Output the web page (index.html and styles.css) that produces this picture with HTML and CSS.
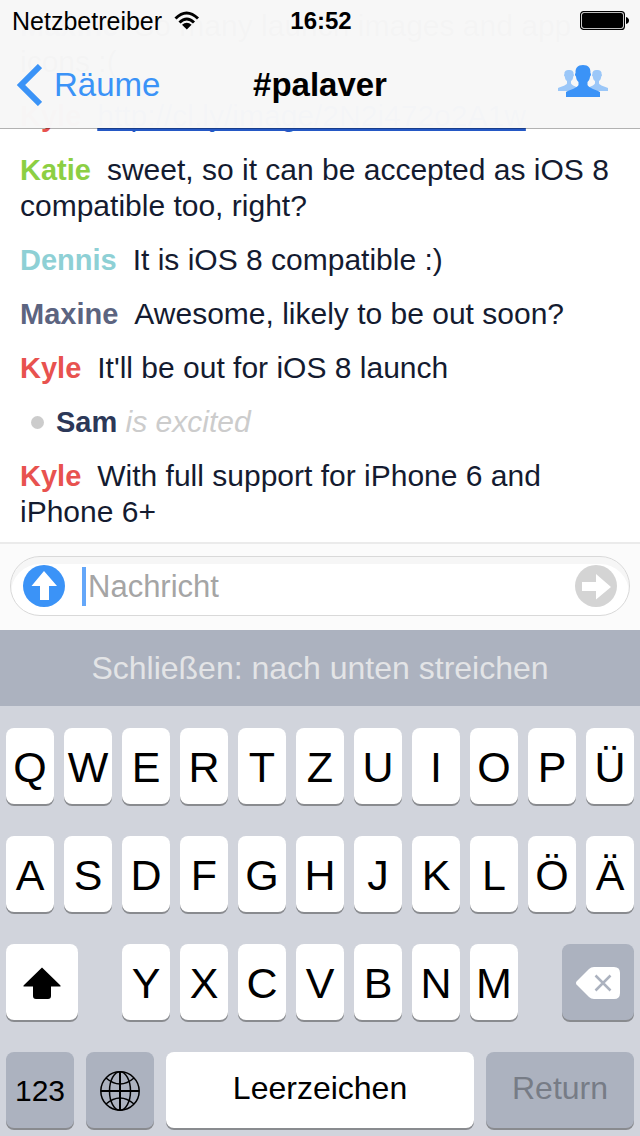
FILE: index.html
```html
<!DOCTYPE html>
<html lang="de">
<head>
<meta charset="utf-8">
<meta name="viewport" content="width=device-width, initial-scale=1">
<title>#palaver</title>
<link rel="stylesheet" href="styles.css">
</head>
<body class="app">
<header class="header">
  <div class="status">
    <div class="carrier">
      <span>Netzbetreiber</span>
      <svg width="26" height="20" viewBox="0 0 26 20" fill="none" stroke="#000" stroke-width="3" aria-hidden="true">
        <path d="M1.5 7.5Q12.500-3.500 24 7.500M5.500 11.500Q12.800 4.500 20 11.500"/>
        <path d="M8 13.800Q12.800 9.800 17.600 13.800L12.800 18.500Z" fill="#000" stroke="none"/>
      </svg>
    </div>
    <time class="time">16:52</time>
    <svg class="battery" width="50" height="20" viewBox="0 0 50 20" aria-hidden="true">
      <rect x=".6" y=".6" width="43.800" height="17.800" rx="3" fill="#fff" stroke="#000" stroke-width="1.200"/>
      <rect x="2" y="2" width="41" height="15" rx="2"/>
      <path d="M46 6q3 1 3 3.500t-3 3.500z"/>
    </svg>
  </div>
  <nav class="nav">
    <button class="back" type="button">
      <svg width="26" height="42" viewBox="0 0 26 42" fill="none" stroke="#3b93f7" stroke-width="6" aria-hidden="true"><path d="M24 2L5 21l19 19"/></svg>
      <span>Räume</span>
    </button>
    <h1 class="title">#palaver</h1>
    <button class="people" type="button" aria-label="Mitglieder">
      <svg width="50" height="32" viewBox="0 0 50 32" aria-hidden="true">
        <g fill="#9bc7f8">
          <path d="M0 26v-3c3-1.500 8-2.500 9-4.500v-2.500c-1.500-1-2-2.500-2.200-4.500-1-.5-1-2-.3-2.500C6 6.500 8 5 11 5s5 1.500 4.500 4c.7.500.7 2-.3 2.500-.2 2-.7 3.500-2.200 4.500v2.500c1 2 4 2.500 6 4v3.500z"/>
          <path d="M50 26v-3c-3-1.500-8-2.500-9-4.500v-2.500c1.500-1 2-2.500 2.200-4.500 1-.5 1-2 .3-2.500C44 6.500 42 5 39 5s-5 1.500-4.500 4c-.7.500-.7 2 .3 2.500.2 2 .7 3.500 2.200 4.500v2.500c-1 2-4 2.500-6 4v3.500z"/>
        </g>
        <path fill="#3b93f7" d="M8 32v-5c3-2 11.500-4 12.500-7v-3c-1.800-1.500-2.300-3.200-2.500-5.500-1.200-.5-1.300-3-.4-3.500C17.200 3 19.500 0 25 0s7.800 3 7.400 8c.9.500.8 3-.4 3.500-.2 2.300-.7 4-2.500 5.500v3c1 3 9.500 5 12.500 7v5z"/>
      </svg>
    </button>
  </nav>
</header>

<main class="chat">
  <p class="message"><b class="maxine">Maxine</b>So many launch images and app icons :(</p>
  <p class="message"><b class="kyle">Kyle</b><a class="link" href="http://cl.ly/image/2N2i472o2A1w">http://cl.ly/image/2N2i472o2A1w</a></p>
  <p class="message"><b class="katie">Katie</b>sweet, so it can be accepted as iOS 8 compatible too, right?</p>
  <p class="message"><b class="dennis">Dennis</b>It is iOS 8 compatible :)</p>
  <p class="message"><b class="maxine">Maxine</b>Awesome, likely to be out soon?</p>
  <p class="message"><b class="kyle">Kyle</b>It'll be out for iOS 8 launch</p>
  <p class="message action"><span class="dot"></span><span><strong class="sam">Sam</strong> <em>is excited</em></span></p>
  <p class="message"><b class="kyle">Kyle</b>With full support for iPhone 6 and iPhone 6+</p>
</main>

<form class="composer">
  <div class="field">
    <button class="round" type="button" aria-label="Hochladen">
      <svg width="42" height="42" viewBox="0 0 42 42" aria-hidden="true"><circle cx="21" cy="21" r="21" fill="#3b93f7"/><path fill="#fff" d="M21 6L34 21H26V35H17V21H8.500Z"/></svg>
    </button>
    <span class="caret"></span>
    <input class="input" type="text" placeholder="Nachricht" aria-label="Nachricht">
    <button class="round" type="button" aria-label="Senden">
      <svg width="42" height="42" viewBox="0 0 42 42" aria-hidden="true"><circle cx="21" cy="21" r="21" fill="#d4d4d4"/><path fill="#fff" d="M36 22L21 34.500V26H7V17H21V9Z"/></svg>
    </button>
  </div>
</form>

<div class="hint">Schließen: nach unten streichen</div>

<section class="keyboard" aria-label="Tastatur">
  <div class="row">
    <button class="key">Q</button><button class="key">W</button><button class="key">E</button><button class="key">R</button><button class="key">T</button><button class="key">Z</button><button class="key">U</button><button class="key">I</button><button class="key">O</button><button class="key">P</button><button class="key">Ü</button>
  </div>
  <div class="row">
    <button class="key">A</button><button class="key">S</button><button class="key">D</button><button class="key">F</button><button class="key">G</button><button class="key">H</button><button class="key">J</button><button class="key">K</button><button class="key">L</button><button class="key">Ö</button><button class="key">Ä</button>
  </div>
  <div class="row shift-row">
    <button class="key" aria-label="Umschalttaste">
      <svg width="38" height="32" viewBox="0 0 38 32" aria-hidden="true"><path d="M19 .5L37.500 18.500v1H28V29q0 3-3 3H13q-3 0-3-3V19.500H.5v-1Z"/></svg>
    </button>
    <div class="row">
      <button class="key">Y</button><button class="key">X</button><button class="key">C</button><button class="key">V</button><button class="key">B</button><button class="key">N</button><button class="key">M</button>
    </div>
    <button class="key dark" aria-label="Löschen">
      <svg width="44" height="32" viewBox="0 0 44 32" aria-hidden="true"><path fill="#fff" d="M.5 14.500L13 2q2-2 5-2H38q6 0 6 6V26q0 6-6 6H18q-3 0-5-2L.5 17.500q-1-1.500 0-3Z"/><path d="M19.500 8.500l15 15m0-15l-15 15" stroke="#acb2bf" stroke-width="2.500"/></svg>
    </button>
  </div>
  <div class="row bottom-row">
    <button class="key dark small">123</button>
    <button class="key dark" aria-label="Tastatur wechseln">
      <svg width="40" height="40" viewBox="0 0 40 40" fill="none" stroke="#000" stroke-width="1.500" aria-hidden="true"><circle cx="20" cy="20" r="19.200"/><ellipse cx="20" cy="20" rx="10.500" ry="19.200"/><path d="M6 7q14 12 28 0M6 33q14-12 28 0"/><path d="M20 1v38M1 20h38" stroke-width="2"/></svg>
    </button>
    <button class="key word">Leerzeichen</button>
    <button class="key dark word" disabled>Return</button>
  </div>
</section>
</body>
</html>
```
FILE: styles.css
```css
* { box-sizing: border-box; }

.app {
  margin: 0;
  min-height: 100vh;
  display: flex;
  flex-direction: column;
  background: #fff;
  font-family: "Liberation Sans", Arial, sans-serif;
  color: #141b30;
}

button, input { font: inherit; border: 0; padding: 0; background: none; }
svg { display: block; flex: none; }

.header {
  position: absolute;
  top: 0;
  left: 0;
  right: 0;
  color: #000;
  background: rgba(247, 247, 247, .99);
  background-clip: padding-box;
  border-bottom: 1px solid rgba(0, 0, 0, .3);
}
.status {
  height: 40px;
  display: grid;
  grid-template-columns: 1fr auto 1fr;
  align-items: center;
  padding: 2px 10px 0 12px;
  font-size: 24px;
}
.carrier { display: flex; align-items: center; gap: 12px; font-size: 25px; }
.time { font-weight: bold; }
.battery { justify-self: end; }
.nav {
  height: 88px;
  display: grid;
  grid-template-columns: 1fr auto 1fr;
  align-items: center;
  padding: 2px 16px 0;
  font-size: 33px;
}
.back { display: flex; align-items: center; gap: 12px; color: #3b93f7; }
.title { margin: 0; font-size: inherit; font-weight: bold; }
.people { justify-self: end; padding: 0 16px 8px 0; }

.chat {
  flex: 1;
  height: 0;
  overflow: hidden;
  display: flex;
  flex-direction: column;
  justify-content: flex-end;
  gap: 18px;
  padding: 0 16px 12px 20px;
  font-size: 30px;
  line-height: 36px;
}
.message { margin: 0; }
.message b { margin-right: 16px; font-size: 29px; }
.katie { color: #8ccf43; }
.dennis { color: #8ed0d5; }
.maxine { color: #5c6480; }
.kyle { color: #e8524f; }
.sam { color: #2c3858; font-size: 29px; }
.link {
  color: #2458c5;
  text-underline-offset: 2px;
  text-decoration-thickness: 3px;
  text-decoration-skip-ink: none;
}
.action { display: flex; align-items: center; gap: 12px; padding-left: 11px; color: #ccc; }
.dot { width: 13px; height: 13px; border-radius: 50%; background: #ccc; }

.composer {
  padding: 12px 10px 14px;
  background: #fbfbfb;
  border-top: 2px solid #ebebeb;
}
.field {
  height: 60px;
  display: flex;
  align-items: center;
  padding: 0 12px;
  border: 1px solid #d9d9d9;
  border-radius: 30px;
  background: #fff;
  box-shadow: inset 0 7px 0 #f6f6f6;
}
.caret { width: 4px; height: 39px; margin-left: 17px; background: #64a7f9; }
.input { flex: 1; min-width: 0; padding: 2px 0 0 2px; font-size: 31px; outline: 0; }
.input::placeholder { color: #a5a5a5; opacity: 1; }

.hint {
  background: #acb2bf;
  color: #e3e4e6;
  font-size: 32px;
  line-height: 76px;
  text-align: center;
}

.keyboard {
  display: flex;
  flex-direction: column;
  gap: 32px;
  padding: 22px 6px 8px;
  background: #d1d4dc;
}
.row { display: flex; gap: 10px; }
.key {
  flex: 1;
  min-width: 0;
  height: 76px;
  padding-top: 2px;
  display: flex;
  align-items: center;
  justify-content: center;
  border-radius: 8px;
  background: #fff;
  box-shadow: 0 2px 0 #898b8f;
  color: #000;
  font-size: 43px;
}
.dark { background: #acb2bf; }
.dark:disabled { color: #777c86; }
.small { font-size: 30px; }
.word { font-size: 32px; padding: 0 0 4px; }
.shift-row { display: grid; grid-template-columns: 72fr 396fr 72fr; gap: 44px; }
.bottom-row { display: grid; grid-template-columns: 68fr 68fr 308fr 148fr; gap: 12px; }
```
